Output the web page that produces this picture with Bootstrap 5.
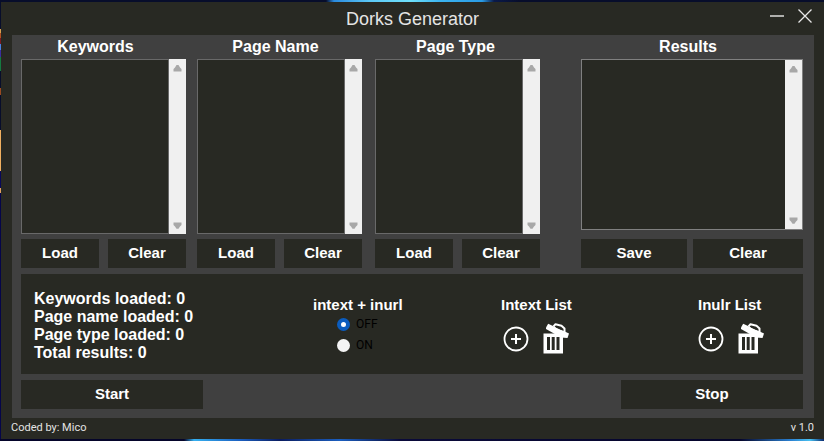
<!DOCTYPE html>
<html lang="en">
<head>
<meta charset="utf-8">
<meta name="viewport" content="width=device-width, initial-scale=1">
<title>Dorks Generator</title>
<link href="https://cdn.jsdelivr.net/npm/bootstrap@5.3.0/dist/css/bootstrap.min.css" rel="stylesheet">
<style>
:root { --ink: #282923; --panel: #404040; --edge: #696969; }
body {
  font-family: "Liberation Sans", Arial, sans-serif;
  color: #fff;
  padding: 2px 0 2px 1px;
  background:
    linear-gradient(90deg, #070d2b 0 326px, #2a8ade 334px, #5cc8f5 370px, #6fe0fb 410px, #3cb4f0 440px, #2a9be4 482px, #0a1a4a 494px, #070d2b 520px) top / 100% 2px no-repeat,
    linear-gradient(90deg, #05052a 0 184px, #35b0f0 194px, #1b5fc0 240px, #0a1c60 280px, #1b5fc0 340px, #0a0a3a 400px, #05052a 740px, #2a7fd0 790px, #48c0f0 810px, #0a2a70) bottom / 100% 2px no-repeat,
    linear-gradient(180deg, #070d2b 0 29px, #d8a050 29px 33px, #b05020 33px 38px, #7a1a20 38px 44px, #4a80e0 44px 50px, #3a2fa0 50px 57px, #157a40 57px 71px, #070d2b 71px 88px, #9a4a20 88px 95px, #070d2b 95px 130px, #f0b060 130px 171px, #08085a 171px 188px, #e0a060 188px 193px, #05054a 193px) left / 1px 100% no-repeat,
    var(--ink);
}
.title-bar { height: 33px; padding: 0 12px 0 0; }
.app-title { font-size: 18px; line-height: 34px; color: #e4e4e4; font-weight: 400; padding-left: 102px; }
.win-btns { width: 90px; gap: 14px; padding-bottom: 5px; }
.win-btn { background: none; border: 0; padding: 0; line-height: 0; }
.work-area { background: var(--panel); margin: 0 10px 0 11px; padding: 0 11px 9px 9px; }
.source-col { flex: 165 1 0; min-width: 0; }
.result-col { flex: 222 1 0; min-width: 0; margin-left: 41px; }
.gap-a { margin-left: 11px; }
.gap-b { margin-left: 13px; }
.col-title { font-size: 16px; line-height: 24px; font-weight: 700; text-align: center; }
.list-box { min-height: 80px; margin-bottom: 5px; }
.list-box textarea { background: var(--ink); color: #fff; border: 1px solid var(--edge); resize: none; outline: 0; min-width: 0; overflow: hidden; font-size: 14px; }
.result-col .list-box { border: 1px solid #808080; margin-bottom: 9px; }
.result-col .list-box textarea { border: 0; }
.scroll-strip { width: 17px; background: #f0f0f0; padding: 6px 0 5px; }
.flat-btn { background: var(--ink); color: #fff; border: 0; height: 29px; padding: 0 0 2px; font-size: 15px; line-height: 27px; font-weight: 700; }
.pair { display: grid; grid-template-columns: 1fr 1fr; gap: 9px; }
.pair-wide { display: grid; grid-template-columns: 106fr 110fr; gap: 6px; }
.info-panel { background: var(--ink); display: grid; grid-template-columns: 279fr 188fr 197fr 105fr; height: 100px; margin: 6px 0; padding-left: 13px; font-size: 16px; line-height: 18px; font-weight: 700; white-space: nowrap; }
.stats { padding-top: 16px; }
.tools { padding-top: 22px; }
.group-title { font-size: 15px; line-height: 18px; font-weight: 700; }
.mode-row { height: 21px; padding-left: 24px; gap: 6px; font: 400 12px/21px Roboto, sans-serif; color: #000; }
.mode-row input { appearance: none; width: 13px; height: 13px; margin: 0; border-radius: 50%; background: #f4f4f4; }
.mode-row input:checked { border: 4px solid #0b5cbe; background: #fff; }
.icon-row { gap: 14px; margin-top: 9px; padding-left: 2px; }
.icon-row-flush { padding-left: 0; }
.wide-btn { width: 182px; }
.foot { font: 400 11px/20px Roboto, sans-serif; color: #e4e4e4; padding: 0 10px 1px; }
</style>
</head>
<body class="vh-100 d-flex flex-column">
<svg class="d-none" aria-hidden="true">
  <symbol id="up" viewBox="0 0 9 7"><path d="M3.500 0h2L7 2.500 8.500 4V6.500H.5V4L2 2.500z" fill="#a8a8a8"/></symbol>
  <symbol id="down" viewBox="0 0 9 7"><path d="M.5.5h8V3L7 4.500 5.500 6.800h-2L2 4.500.5 3z" fill="#a8a8a8"/></symbol>
  <symbol id="plus" viewBox="0 0 26 26"><circle cx="13" cy="13" r="11.500" fill="none" stroke="#fff" stroke-width="1.800"/><path d="M13 8v10M8 13h10" stroke="#fff" stroke-width="2"/></symbol>
  <symbol id="bin" viewBox="0 0 26 31">
    <path fill="#fff" fill-rule="evenodd" d="M.5 10.500h19.500V30.500H.5zM4 14v13h3V14zM8.700 14v13h3V14zM13.500 14v13h3V14z"/>
    <path fill="#fff" d="M5.200.8 26 10.500 24.500 15 18 14.500 3 6V4.500z"/>
    <path fill="none" stroke="#fff" stroke-width="2" stroke-linejoin="round" d="M10.500 3.500 12.500 1.200 18.500 2.800 21.500 5.500 21.500 9.500"/>
    <path stroke="#282923" stroke-width="1.400" d="m13.200 3.800 5.500 2.500"/>
  </symbol>
</svg>

<header class="title-bar d-flex align-items-center">
  <h1 class="app-title flex-grow-1 text-center mb-0">Dorks Generator</h1>
  <div class="win-btns d-flex justify-content-end">
    <button class="win-btn" type="button" aria-label="Minimize"><svg width="14" height="14" viewBox="0 0 14 14"><path d="M0 7h14" stroke="#ddd" stroke-width="1.500"/></svg></button>
    <button class="win-btn" type="button" aria-label="Close"><svg width="14" height="14" viewBox="0 0 14 14"><path d="m.5.5 13 13m0-13-13 13" stroke="#e8e8e8" stroke-width="1.300"/></svg></button>
  </div>
</header>

<main class="work-area flex-grow-1 d-flex flex-column">
  <div class="d-flex flex-grow-1">
    <section class="source-col d-flex flex-column">
      <label class="col-title pe-3" for="keywords">Keywords</label>
      <div class="list-box d-flex flex-grow-1">
        <textarea id="keywords" class="flex-grow-1" cols="1" readonly></textarea>
        <div class="scroll-strip d-flex flex-column align-items-center justify-content-between"><svg width="9" height="7"><use href="#up"/></svg><svg width="9" height="7"><use href="#down"/></svg></div>
      </div>
      <div class="pair"><button class="btn flat-btn rounded-0" type="button">Load</button><button class="btn flat-btn rounded-0" type="button">Clear</button></div>
    </section>
    <section class="source-col gap-a d-flex flex-column">
      <label class="col-title pe-2" for="pageName">Page Name</label>
      <div class="list-box d-flex flex-grow-1">
        <textarea id="pageName" class="flex-grow-1" cols="1" readonly></textarea>
        <div class="scroll-strip d-flex flex-column align-items-center justify-content-between"><svg width="9" height="7"><use href="#up"/></svg><svg width="9" height="7"><use href="#down"/></svg></div>
      </div>
      <div class="pair"><button class="btn flat-btn rounded-0" type="button">Load</button><button class="btn flat-btn rounded-0" type="button">Clear</button></div>
    </section>
    <section class="source-col gap-b d-flex flex-column">
      <label class="col-title pe-1" for="pageType">Page Type</label>
      <div class="list-box d-flex flex-grow-1">
        <textarea id="pageType" class="flex-grow-1" cols="1" readonly></textarea>
        <div class="scroll-strip d-flex flex-column align-items-center justify-content-between"><svg width="9" height="7"><use href="#up"/></svg><svg width="9" height="7"><use href="#down"/></svg></div>
      </div>
      <div class="pair"><button class="btn flat-btn rounded-0" type="button">Load</button><button class="btn flat-btn rounded-0" type="button">Clear</button></div>
    </section>
    <section class="result-col d-flex flex-column">
      <label class="col-title pe-2" for="results">Results</label>
      <div class="list-box d-flex flex-grow-1">
        <textarea id="results" class="flex-grow-1" cols="1" readonly></textarea>
        <div class="scroll-strip d-flex flex-column align-items-center justify-content-between"><svg width="9" height="7"><use href="#up"/></svg><svg width="9" height="7"><use href="#down"/></svg></div>
      </div>
      <div class="pair-wide"><button class="btn flat-btn rounded-0" type="button">Save</button><button class="btn flat-btn rounded-0" type="button">Clear</button></div>
    </section>
  </div>

  <section class="info-panel">
    <div class="stats">
      <div>Keywords loaded: 0</div>
      <div>Page name loaded: 0</div>
      <div>Page type loaded: 0</div>
      <div>Total results: 0</div>
    </div>
    <fieldset class="tools">
      <legend class="group-title mb-0">intext + inurl</legend>
      <div class="mode-row d-flex align-items-center"><input type="radio" name="mode" id="modeOff" checked><label for="modeOff">OFF</label></div>
      <div class="mode-row d-flex align-items-center"><input type="radio" name="mode" id="modeOn"><label for="modeOn">ON</label></div>
    </fieldset>
    <div class="tools">
      <h2 class="group-title mb-0">Intext List</h2>
      <div class="icon-row d-flex align-items-center">
        <button class="win-btn" type="button" aria-label="Add intext list"><svg width="26" height="26"><use href="#plus"/></svg></button>
        <button class="win-btn" type="button" aria-label="Delete intext list"><svg width="26" height="31"><use href="#bin"/></svg></button>
      </div>
    </div>
    <div class="tools">
      <h2 class="group-title mb-0">Inulr List</h2>
      <div class="icon-row icon-row-flush d-flex align-items-center">
        <button class="win-btn" type="button" aria-label="Add inurl list"><svg width="26" height="26"><use href="#plus"/></svg></button>
        <button class="win-btn" type="button" aria-label="Delete inurl list"><svg width="26" height="31"><use href="#bin"/></svg></button>
      </div>
    </div>
  </section>

  <div class="d-flex justify-content-between">
    <button class="btn flat-btn wide-btn rounded-0" type="button">Start</button>
    <button class="btn flat-btn wide-btn rounded-0" type="button">Stop</button>
  </div>
</main>

<footer class="foot d-flex justify-content-between"><span>Coded by: Mico</span><span>v 1.0</span></footer>
<script src="https://cdn.jsdelivr.net/npm/bootstrap@5.3.0/dist/js/bootstrap.bundle.min.js"></script>
</body>
</html>
